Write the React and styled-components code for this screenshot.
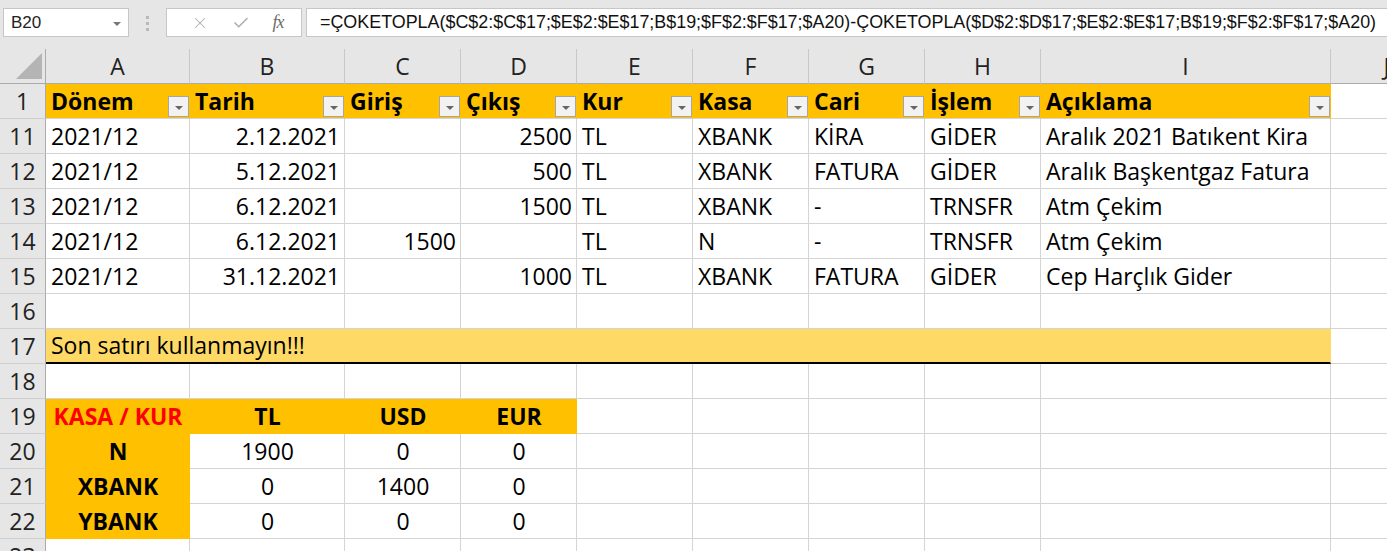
import React from "react";
import styled, { createGlobalStyle } from "styled-components";
import { X, Check } from "lucide-react";

const GlobalStyle = createGlobalStyle`
  html, body {
    margin: 0;
    padding: 0;
    background: #ffffff;
    overflow: hidden;
  }
`;

const COLS = [46, 144, 155, 116, 116, 116, 116, 116, 116, 290, 112];
const GRID = "#d4d4d4";
const HEAD_BG = "#e6e6e6";
const YELLOW = "#ffc000";
const LIGHT_YELLOW = "#ffd966";

const Page = styled.div`
  width: 1443px;
  font-family: "Open Sans", "Noto Sans", sans-serif;
`;

const Toolbar = styled.div`
  display: flex;
  align-items: flex-start;
  height: 49px;
  box-sizing: border-box;
  padding: 8px 0 0 3px;
  background: ${HEAD_BG};
  font-family: "Liberation Sans", Arial, sans-serif;
`;

const NameBox = styled.div`
  display: flex;
  align-items: center;
  justify-content: space-between;
  width: 126px;
  height: 29px;
  box-sizing: border-box;
  padding: 0 7px 0 7px;
  background: #fff;
  border: 1px solid #c6c6c6;
  font-size: 17px;
  color: #222;
`;

const Caret = styled.span`
  width: 0;
  height: 0;
  border-left: 4px solid transparent;
  border-right: 4px solid transparent;
  border-top: 4px solid #777;
  margin-top: 2px;
`;

const Grip = styled.div`
  display: flex;
  flex-direction: column;
  gap: 3px;
  margin: 8px 17px 0 17px;
  span {
    width: 3px;
    height: 3px;
    background: #b9b9b9;
  }
`;

const FxBox = styled.div`
  display: flex;
  align-items: center;
  justify-content: space-around;
  width: 136px;
  height: 29px;
  box-sizing: border-box;
  padding: 0 6px 0 12px;
  background: #fff;
  border: 1px solid #c6c6c6;
  color: #b0b0b0;
`;

const Fx = styled.span`
  font-family: "Liberation Serif", serif;
  font-style: italic;
  font-size: 18px;
  color: #6d6d6d;
  letter-spacing: -1px;
`;

const Formula = styled.div`
  flex: 1;
  display: flex;
  align-items: center;
  height: 29px;
  box-sizing: border-box;
  margin-left: 4px;
  padding-left: 13px;
  background: #fff;
  border: 1px solid #c6c6c6;
  border-right: none;
  font-size: 17.9px;
  color: #111;
  white-space: nowrap;
  overflow: hidden;
`;

const Sheet = styled.div`
  display: grid;
  grid-template-columns: ${COLS.map((c) => c + "px").join(" ")};
  grid-auto-rows: 35px;
`;

const Corner = styled.div`
  display: flex;
  align-items: flex-end;
  justify-content: flex-end;
  padding: 0 3px 4px 0;
  box-sizing: border-box;
  background: ${HEAD_BG};
  border-right: 1px solid #ababab;
  border-bottom: 1px solid #ababab;
  &::after {
    content: "";
    width: 26px;
    height: 26px;
    background: #b4b4b4;
    clip-path: polygon(100% 0, 100% 100%, 0 100%);
  }
`;

const ColHead = styled.div`
  display: flex;
  align-items: center;
  justify-content: center;
  box-sizing: border-box;
  background: ${HEAD_BG};
  border-right: 1px solid #c8c8c8;
  border-bottom: 1px solid #ababab;
  font-size: 23px;
  line-height: 33px;
  color: #222;
  overflow: hidden;
`;

const RowNum = styled.div`
  display: flex;
  align-items: center;
  justify-content: center;
  box-sizing: border-box;
  background: ${HEAD_BG};
  border-right: 1px solid #ababab;
  border-bottom: 1px solid #cfcfcf;
  font-size: 23px;
  line-height: 33px;
  color: #222;
`;

const Cell = styled.div`
  display: flex;
  align-items: center;
  justify-content: ${(p) =>
    p.$align === "right" ? "flex-end" : p.$align === "center" ? "center" : "flex-start"};
  grid-column: span ${(p) => p.$span || 1};
  box-sizing: border-box;
  padding: 0 4px 0 5px;
  background: ${(p) => p.$fill || "#fff"};
  border-right: 1px solid ${(p) => p.$fill || GRID};
  border-bottom: ${(p) => (p.$thick ? "2px solid #000" : `1px solid ${p.$fill || GRID}`)};
  font-size: 23px;
  line-height: 33px;
  font-weight: ${(p) => (p.$bold ? 700 : 400)};
  color: ${(p) => p.$color || "#000"};
  white-space: nowrap;
  overflow: hidden;
`;

const HeadCell = styled(Cell)`
  padding: 0 0 0 5px;
  justify-content: space-between;
  border-bottom-color: #d4d4d4;
`;

const FilterButton = styled.span`
  display: flex;
  align-items: center;
  justify-content: center;
  align-self: flex-end;
  flex: none;
  width: 21px;
  height: 21px;
  margin-bottom: 1px;
  box-sizing: border-box;
  background: #f2f2f2;
  border: 1px solid #a6a6a6;
  &::after {
    content: "";
    width: 0;
    height: 0;
    margin-top: 2px;
    border-left: 4px solid transparent;
    border-right: 4px solid transparent;
    border-top: 4px solid #666;
  }
`;

const header = ["Dönem", "Tarih", "Giriş", "Çıkış", "Kur", "Kasa", "Cari", "İşlem", "Açıklama"];
const colAlign = ["left", "right", "right", "right", "left", "left", "left", "left", "left"];

const records = [
  [11, "2021/12", "2.12.2021", "", "2500", "TL", "XBANK", "KİRA", "GİDER", "Aralık 2021 Batıkent Kira"],
  [12, "2021/12", "5.12.2021", "", "500", "TL", "XBANK", "FATURA", "GİDER", "Aralık Başkentgaz Fatura"],
  [13, "2021/12", "6.12.2021", "", "1500", "TL", "XBANK", "-", "TRNSFR", "Atm Çekim"],
  [14, "2021/12", "6.12.2021", "1500", "", "TL", "N", "-", "TRNSFR", "Atm Çekim"],
  [15, "2021/12", "31.12.2021", "", "1000", "TL", "XBANK", "FATURA", "GİDER", "Cep Harçlık Gider"],
];

const summary = [
  [20, "N", "1900", "0", "0"],
  [21, "XBANK", "0", "1400", "0"],
  [22, "YBANK", "0", "0", "0"],
];

const letters = ["A", "B", "C", "D", "E", "F", "G", "H", "I", "J"];
const formula =
  "=ÇOKETOPLA($C$2:$C$17;$E$2:$E$17;B$19;$F$2:$F$17;$A20)-ÇOKETOPLA($D$2:$D$17;$E$2:$E$17;B$19;$F$2:$F$17;$A20)";

const EmptyCells = ({ from = 0, to = 10 }) =>
  Array.from({ length: to - from }, (_, i) => <Cell key={"e" + (from + i)} />);

const App = () => {
  return (
    <Page>
      <GlobalStyle />
      <Toolbar>
        <NameBox>
          B20
          <Caret />
        </NameBox>
        <Grip>
          <span />
          <span />
          <span />
        </Grip>
        <FxBox>
          <X size={18} strokeWidth={1.4} />
          <Check size={18} strokeWidth={2.2} />
          <Fx>fx</Fx>
        </FxBox>
        <Formula>{formula}</Formula>
      </Toolbar>

      <Sheet>
        <Corner />
        {letters.map((l) => (
          <ColHead key={l}>{l}</ColHead>
        ))}

        <RowNum>1</RowNum>
        {header.map((h) => (
          <HeadCell key={h} $fill={YELLOW} $bold>
            {h}
            <FilterButton />
          </HeadCell>
        ))}
        <Cell />

        {records.map(([n, ...vals]) => (
          <React.Fragment key={n}>
            <RowNum>{n}</RowNum>
            {vals.map((v, i) => (
              <Cell key={i} $align={colAlign[i]}>
                {v}
              </Cell>
            ))}
            <Cell />
          </React.Fragment>
        ))}

        <RowNum>16</RowNum>
        <EmptyCells />

        <RowNum>17</RowNum>
        <Cell $span={9} $fill={LIGHT_YELLOW} $thick>
          Son satırı kullanmayın!!!
        </Cell>
        <Cell />

        <RowNum>18</RowNum>
        <EmptyCells />

        <RowNum>19</RowNum>
        <Cell $fill={YELLOW} $bold $align="center" $color="#ff0000">
          KASA / KUR
        </Cell>
        {["TL", "USD", "EUR"].map((c) => (
          <Cell key={c} $fill={YELLOW} $bold $align="center">
            {c}
          </Cell>
        ))}
        <EmptyCells from={4} />

        {summary.map(([n, name, ...vals]) => (
          <React.Fragment key={n}>
            <RowNum>{n}</RowNum>
            <Cell $fill={YELLOW} $bold $align="center">
              {name}
            </Cell>
            {vals.map((v, i) => (
              <Cell key={i} $align="center">
                {v}
              </Cell>
            ))}
            <EmptyCells from={4} />
          </React.Fragment>
        ))}

        <RowNum>23</RowNum>
        <EmptyCells />
      </Sheet>
    </Page>
  );
};

export default App;
